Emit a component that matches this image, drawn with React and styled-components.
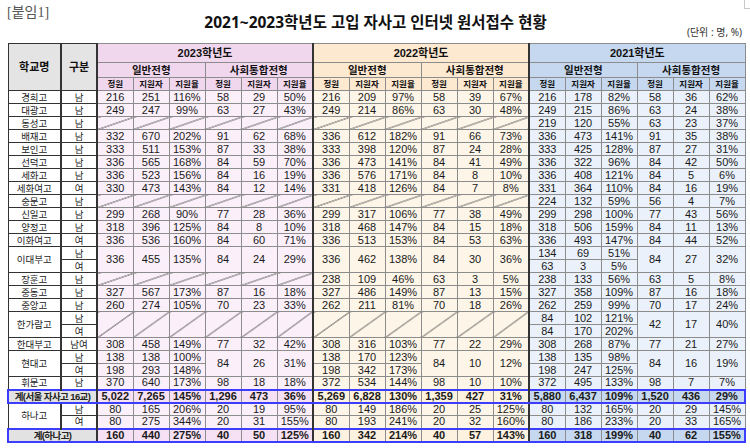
import React from 'react';
import styled, { createGlobalStyle, css } from 'styled-components';

const GlobalStyle = createGlobalStyle`
  html, body { margin: 0; padding: 0; background: #fff; }
  body { font-family: "Liberation Sans", "Noto Sans CJK KR", sans-serif; color: #222; }
`;

const tones = {
  grey: { head: '#e4e4e4', cell: '#ffffff', total: '#e2e2e2' },
  pink: { head: '#f1d7ee', cell: '#fbf0fa', total: '#f6e0f3' },
  cream: { head: '#fde8d0', cell: '#fdf5e8', total: '#fdf1df' },
  blue: { head: '#c5d8f0', cell: '#eaf1fa', total: '#c5d8f0' },
};

const BLUE = '#3d3dff';
const DARK = '#333';
const GRID = '#8c8c8c';

const Page = styled.div`
  position: relative;
  width: 750px;
  height: 448px;
  padding: 0 6px 0 7px;
  box-sizing: border-box;
  overflow: hidden;
`;

const Corner = styled.span`
  position: absolute;
  top: 0;
  right: 0;
  width: 5px;
  height: 8px;
  border-left: 1px solid #c8c8c8;
  border-bottom: 1px solid #c8c8c8;
`;

const Top = styled.header`
  display: grid;
  grid-template-columns: 1fr auto 1fr;
  height: 38px;
  margin-bottom: 5px;
`;

const Tag = styled.div`
  align-self: start;
  margin-top: 3px;
  font-family: "Liberation Serif", "Noto Sans CJK KR", serif;
  font-size: 14px;
  line-height: 19px;
  color: #555;
`;

const Title = styled.h1`
  margin: 12px 0 0;
  align-self: start;
  font-family: "Noto Sans", "Noto Sans CJK KR", sans-serif;
  font-size: 15.5px;
  line-height: 20px;
  font-weight: 700;
  color: #111;
`;

const Unit = styled.div`
  align-self: end;
  justify-self: end;
  padding-right: 2px;
  font-family: "Noto Sans", "Noto Sans CJK KR", sans-serif;
  font-size: 10px;
  line-height: 12px;
  color: #333;
`;

const Table = styled.table`
  width: 737px;
  table-layout: fixed;
  border-collapse: collapse;
  border: 1px solid #555;
`;

const Col = styled.col`
  width: ${(p) => p.$w}px;
`;

const Row = styled.tr`
  height: ${(p) => p.$h}px;
`;

const Th = styled.th`
  padding: 0;
  font-weight: 700;
  font-size: ${(p) => p.$fs || 10.5}px;
  line-height: ${(p) => Math.min(12, p.$fs || 12)}px;
  color: #111;
  white-space: nowrap;
  overflow: hidden;
  background: ${(p) => tones[p.$tone].head};
  border: 1px solid ${GRID};
  ${(p) => p.$edge && css`border-left: 2px solid ${DARK};`}
  ${(p) => p.$left && css`border-color: ${DARK};`}
  ${(p) => p.$split && css`border-right: 2px solid ${DARK};`}
`;

const Label = styled.td`
  padding: 0;
  text-align: center;
  font-size: 9.5px;
  line-height: 11px;
  white-space: nowrap;
  overflow: hidden;
  color: #222;
  border: 1px solid ${DARK};
  background: #fff;
  ${(p) => p.$split && css`border-right: 2px solid ${DARK};`}
  ${(p) =>
    p.$total &&
    css`
      background: ${tones.grey.total};
      font-weight: 700;
      font-size: 9.5px;
      letter-spacing: -0.6px;
      border-top: 2px solid ${BLUE};
      border-bottom: 2px solid ${BLUE};
      border-left: 2px solid ${BLUE};
    `}
`;

const slashBg = (c) =>
  `linear-gradient(to bottom right, transparent calc(50% - 0.7px), #3a3a3a 50%, transparent calc(50% + 0.7px)), ${c}`;

const Td = styled.td`
  padding: 0;
  text-align: center;
  font-size: 11px;
  line-height: 11px;
  white-space: nowrap;
  overflow: hidden;
  color: #1a1a1a;
  font-weight: ${(p) => (p.$total ? 700 : 400)};
  border: 1px solid ${GRID};
  background: ${(p) =>
    p.$slash
      ? slashBg(tones[p.$tone].cell)
      : p.$total
      ? tones[p.$tone].total
      : tones[p.$tone].cell};
  ${(p) => p.$edge && css`border-left: 2px solid ${DARK};`}
  ${(p) =>
    p.$total &&
    css`
      border-top: 2px solid ${BLUE};
      border-bottom: 2px solid ${BLUE};
    `}
  ${(p) => p.$total && p.$last && css`border-right: 2px solid ${BLUE};`}
`;

const S = '/';

const groups = [
  ['경희고', '남', ['216 251 116%', '58 29 50%'], ['216 209 97%', '58 39 67%'], ['216 178 82%', '58 36 62%']],
  ['대광고', '남', ['249 247 99%', '63 27 43%'], ['249 214 86%', '63 30 48%'], ['249 215 86%', '63 24 38%']],
  ['동성고', '남', S, S, ['219 120 55%', '63 23 37%']],
  ['배재고', '남', ['332 670 202%', '91 62 68%'], ['336 612 182%', '91 66 73%'], ['336 473 141%', '91 35 38%']],
  ['보인고', '남', ['333 511 153%', '87 33 38%'], ['333 398 120%', '87 24 28%'], ['333 425 128%', '87 27 31%']],
  ['선덕고', '남', ['336 565 168%', '84 59 70%'], ['336 473 141%', '84 41 49%'], ['336 322 96%', '84 42 50%']],
  ['세화고', '남', ['336 523 156%', '84 16 19%'], ['336 576 171%', '84 8 10%'], ['336 408 121%', '84 5 6%']],
  ['세화여고', '여', ['330 473 143%', '84 12 14%'], ['331 418 126%', '84 7 8%'], ['331 364 110%', '84 16 19%']],
  ['숭문고', '남', S, S, ['224 132 59%', '56 4 7%']],
  ['신일고', '남', ['299 268 90%', '77 28 36%'], ['299 317 106%', '77 38 49%'], ['299 298 100%', '77 43 56%']],
  ['양정고', '남', ['318 396 125%', '84 8 10%'], ['318 468 147%', '84 15 18%'], ['318 506 159%', '84 11 13%']],
  ['이화여고', '여', ['336 536 160%', '84 60 71%'], ['336 513 153%', '84 53 63%'], ['336 493 147%', '84 44 52%']],
  ['이대부고', '남,여', ['336 455 135%', '84 24 29%'], ['336 462 138%', '84 30 36%'], [['134 69 51%', '63 3 5%'], '84 27 32%']],
  ['장훈고', '남', S, ['238 109 46%', '63 3 5%'], ['238 133 56%', '63 5 8%']],
  ['중동고', '남', ['327 567 173%', '87 16 18%'], ['327 486 149%', '87 13 15%'], ['327 358 109%', '87 16 18%']],
  ['중앙고', '남', ['260 274 105%', '70 23 33%'], ['262 211 81%', '70 18 26%'], ['262 259 99%', '70 17 24%']],
  ['한가람고', '남,여', S, S, [['84 102 121%', '84 170 202%'], '42 17 40%']],
  ['한대부고', '남여', ['308 458 149%', '77 32 42%'], ['308 316 103%', '77 22 29%'], ['308 268 87%', '77 21 27%']],
  ['현대고', '남,여', [['138 138 100%', '198 293 148%'], '84 26 31%'], [['138 170 123%', '198 342 173%'], '84 10 12%'], [['138 135 98%', '198 247 125%'], '84 16 19%']],
  ['휘문고', '남', ['370 640 173%', '98 18 18%'], ['372 534 144%', '98 10 10%'], ['372 495 133%', '98 7 7%']],
  { total: '계(서울 자사고 16교)', blocks: [['5,022 7,265 145%', '1,296 473 36%'], ['5,269 6,828 130%', '1,359 427 31%'], ['5,880 6,437 109%', '1,520 436 29%']] },
  ['하나고', '남,여', [['80 165 206%', '80 275 344%'], ['20 19 95%', '20 31 155%']], [['80 149 186%', '80 193 241%'], ['20 25 125%', '20 32 160%']], [['80 132 165%', '80 186 233%'], ['20 29 145%', '20 33 165%']]],
  { total: '계(하나고)', blocks: [['160 440 275%', '40 50 125%'], ['160 342 214%', '40 57 143%'], ['160 318 199%', '40 62 155%']] },
];

const years = [
  { label: '2023학년도', tone: 'pink' },
  { label: '2022학년도', tone: 'cream' },
  { label: '2021학년도', tone: 'blue' },
];

const parse = (x) => (Array.isArray(x) ? x.map((s) => s.split(' ')) : x.split(' '));

function partCells(part, r, n, opts) {
  const { tone, edge, total, last, key } = opts;
  if (part === S) {
    if (r > 0) return [];
    return [0, 1, 2].map((i) => (
      <Td key={key + i} rowSpan={n} $tone={tone} $slash $edge={edge && i === 0} />
    ));
  }
  const p = parse(part);
  const perRow = Array.isArray(p[0]);
  if (!perRow && r > 0) return [];
  const vals = perRow ? p[r] : p;
  return vals.map((v, i) => (
    <Td
      key={key + i}
      rowSpan={perRow ? 1 : n}
      $tone={tone}
      $edge={edge && i === 0}
      $total={total}
      $last={last && i === 2}
    >
      {v}
    </Td>
  ));
}

function blockCells(block, r, n, yi, total) {
  const tone = years[yi].tone;
  const [gen, soc] = block === S ? [S, S] : block;
  return [
    ...partCells(gen, r, n, { tone, edge: true, total, key: `g${yi}` }),
    ...partCells(soc, r, n, { tone, edge: false, total, last: yi === 2, key: `s${yi}` }),
  ];
}

function Body() {
  const rows = [];
  groups.forEach((g, gi) => {
    if (!Array.isArray(g)) {
      rows.push(
        <Row key={`t${gi}`} $h={13}>
          <Label colSpan={2} $total>
            {g.total}
          </Label>
          {g.blocks.map((b, yi) => blockCells(b, 0, 1, yi, true))}
        </Row>
      );
      return;
    }
    const [name, sexText, ...blocks] = g;
    const sexes = sexText.split(',');
    const n = sexes.length;
    sexes.forEach((sex, r) => {
      rows.push(
        <Row key={`${gi}-${r}`} $h={13}>
          {r === 0 && (
            <Label rowSpan={n} $split>
              {name}
            </Label>
          )}
          <Label>{sex}</Label>
          {blocks.map((b, yi) => blockCells(b, r, n, yi, false))}
        </Row>
      );
    });
  });
  return <tbody>{rows}</tbody>;
}

function Head() {
  return (
    <thead>
      <Row $h={19}>
        <Th rowSpan={3} $tone="grey" $left $split $fs={11}>
          학교명
        </Th>
        <Th rowSpan={3} $tone="grey" $left $fs={11}>
          구분
        </Th>
        {years.map((y) => (
          <Th key={y.label} colSpan={6} $tone={y.tone} $edge $fs={11}>
            {y.label}
          </Th>
        ))}
      </Row>
      <Row $h={15}>
        {years.map((y) => (
          <React.Fragment key={y.label}>
            <Th colSpan={3} $tone={y.tone} $edge>
              일반전형
            </Th>
            <Th colSpan={3} $tone={y.tone}>
              사회통합전형
            </Th>
          </React.Fragment>
        ))}
      </Row>
      <Row $h={13}>
        {years.map((y) =>
          [0, 1].map((k) =>
            ['정원', '지원자', '지원율'].map((t, i) => (
              <Th key={`${y.label}${k}${t}`} $tone={y.tone} $fs={8.5} $edge={k === 0 && i === 0}>
                {t}
              </Th>
            ))
          )
        )}
      </Row>
    </thead>
  );
}

export default function App() {
  return (
    <>
      <GlobalStyle />
      <Page>
        <Corner />
        <Top>
          <Tag>[붙임1]</Tag>
          <Title>2021~2023학년도 고입 자사고 인터넷 원서접수 현황</Title>
          <Unit>(단위 : 명, %)</Unit>
        </Top>
        <Table>
          <colgroup>
            <Col $w={53} />
            <Col $w={36} />
            {Array.from({ length: 18 }).map((_, i) => (
              <Col key={i} $w={36} />
            ))}
          </colgroup>
          <Head />
          <Body />
        </Table>
      </Page>
    </>
  );
}
